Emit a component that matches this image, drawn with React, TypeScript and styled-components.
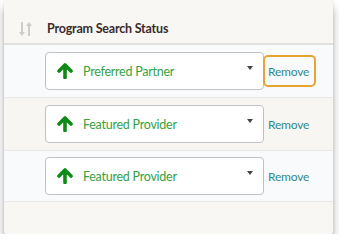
import React from "react";
import styled, { createGlobalStyle } from "styled-components";

const GlobalStyle = createGlobalStyle`
  html, body {
    margin: 0;
    padding: 0;
    background: #ffffff;
  }
  body {
    font-family: Lato, "Noto Sans", sans-serif;
  }
`;

const CardEl = styled.div`
  width: 329px;
  margin: 0 0 0 4px;
  background: #f8f7f4;
  border-radius: 3px;
  box-shadow: 0 7px 9px rgba(0, 0, 0, 0.32), 0 0 2px rgba(0, 0, 0, 0.12);
  overflow: hidden;
`;
const HeaderEl = styled.div`
  box-sizing: border-box;
  height: 45px;
  display: flex;
  align-items: center;
  padding: 14px 0 0 15px;
  gap: 15px;
  background: #f8f7f4;
  border-bottom: 2px solid #e2e0dc;
`;
const HeaderTitleEl = styled.span`
  font-size: 12.5px;
  font-weight: 700;
  letter-spacing: -0.2px;
  color: #3b2b2d;
`;
const RowEl = styled.div<{ $shade?: boolean; $height: number }>`
  display: flex;
  align-items: center;
  height: ${(props) => props.$height}px;
  padding-left: 41px;
  background: ${(props) => (props.$shade ? "#f7f6f2" : "#f9fafb")};
  border-bottom: 1px solid #e8e8e6;
  &:last-of-type {
    border-bottom: none;
  }
`;
const SelectEl = styled.div`
  box-sizing: border-box;
  width: 219px;
  height: 38px;
  display: flex;
  align-items: center;
  padding-left: 11px;
  padding-right: 10px;
  background: #ffffff;
  border: 1px solid #c2c2c2;
  border-radius: 4px;
`;
const SelectTextEl = styled.span`
  flex: 1;
  margin-left: 10px;
  font-size: 12.5px;
  letter-spacing: -0.25px;
  color: #35a23f;
`;
const CaretEl = styled.span`
  width: 0;
  height: 0;
  margin-bottom: 7px;
  border-left: 3.5px solid transparent;
  border-right: 3.5px solid transparent;
  border-top: 4px solid #444444;
`;
const RemoveButton = styled.button<{ $focused?: boolean }>`
  box-sizing: border-box;
  height: 32px;
  margin-left: -1px;
  padding: 0 5px 0 3px;
  background: none;
  border: 2px solid ${(props) => (props.$focused ? "#e8a432" : "transparent")};
  border-radius: 5px;
  font-family: Lato, "Noto Sans", sans-serif;
  font-size: 12px;
  letter-spacing: -0.2px;
  color: #2f8a8f;
  cursor: pointer;
`;
const FooterEl = styled.div`
  height: 32px;
  background: #f8f7f4;
`;

const SortIcon = () => (
  <svg width="13" height="14" viewBox="0 0 13 14" fill="#cfcdcb">
    <path d="M2 0h2v10h2l-3 4-3-4h2z" />
    <path d="M9 14h2V4h2l-3-4-3 4h2z" />
  </svg>
);

const UpArrow = () => (
  <svg width="16" height="16" viewBox="0 0 16 16">
    <path
      d="M8 2 L14 8 M8 2 L2 8 M8 2.5 V14.5"
      stroke="#0f8a17"
      strokeWidth="3.6"
      strokeLinecap="round"
      strokeLinejoin="round"
      fill="none"
    />
  </svg>
);

const rows = [
  { label: "Preferred Partner", height: 52, shade: false, focused: true },
  { label: "Featured Provider", height: 52, shade: true, focused: false },
  { label: "Featured Provider", height: 50, shade: false, focused: false },
];

export default function App() {
  return (
    <>
      <GlobalStyle />
      <CardEl>
        <HeaderEl>
          <SortIcon />
          <HeaderTitleEl>Program Search Status</HeaderTitleEl>
        </HeaderEl>
        {rows.map((row, i) => (
          <RowEl key={i} $shade={row.shade} $height={row.height}>
            <SelectEl>
              <UpArrow />
              <SelectTextEl>{row.label}</SelectTextEl>
              <CaretEl />
            </SelectEl>
            <RemoveButton $focused={row.focused}>Remove</RemoveButton>
          </RowEl>
        ))}
        <FooterEl />
      </CardEl>
    </>
  );
}
